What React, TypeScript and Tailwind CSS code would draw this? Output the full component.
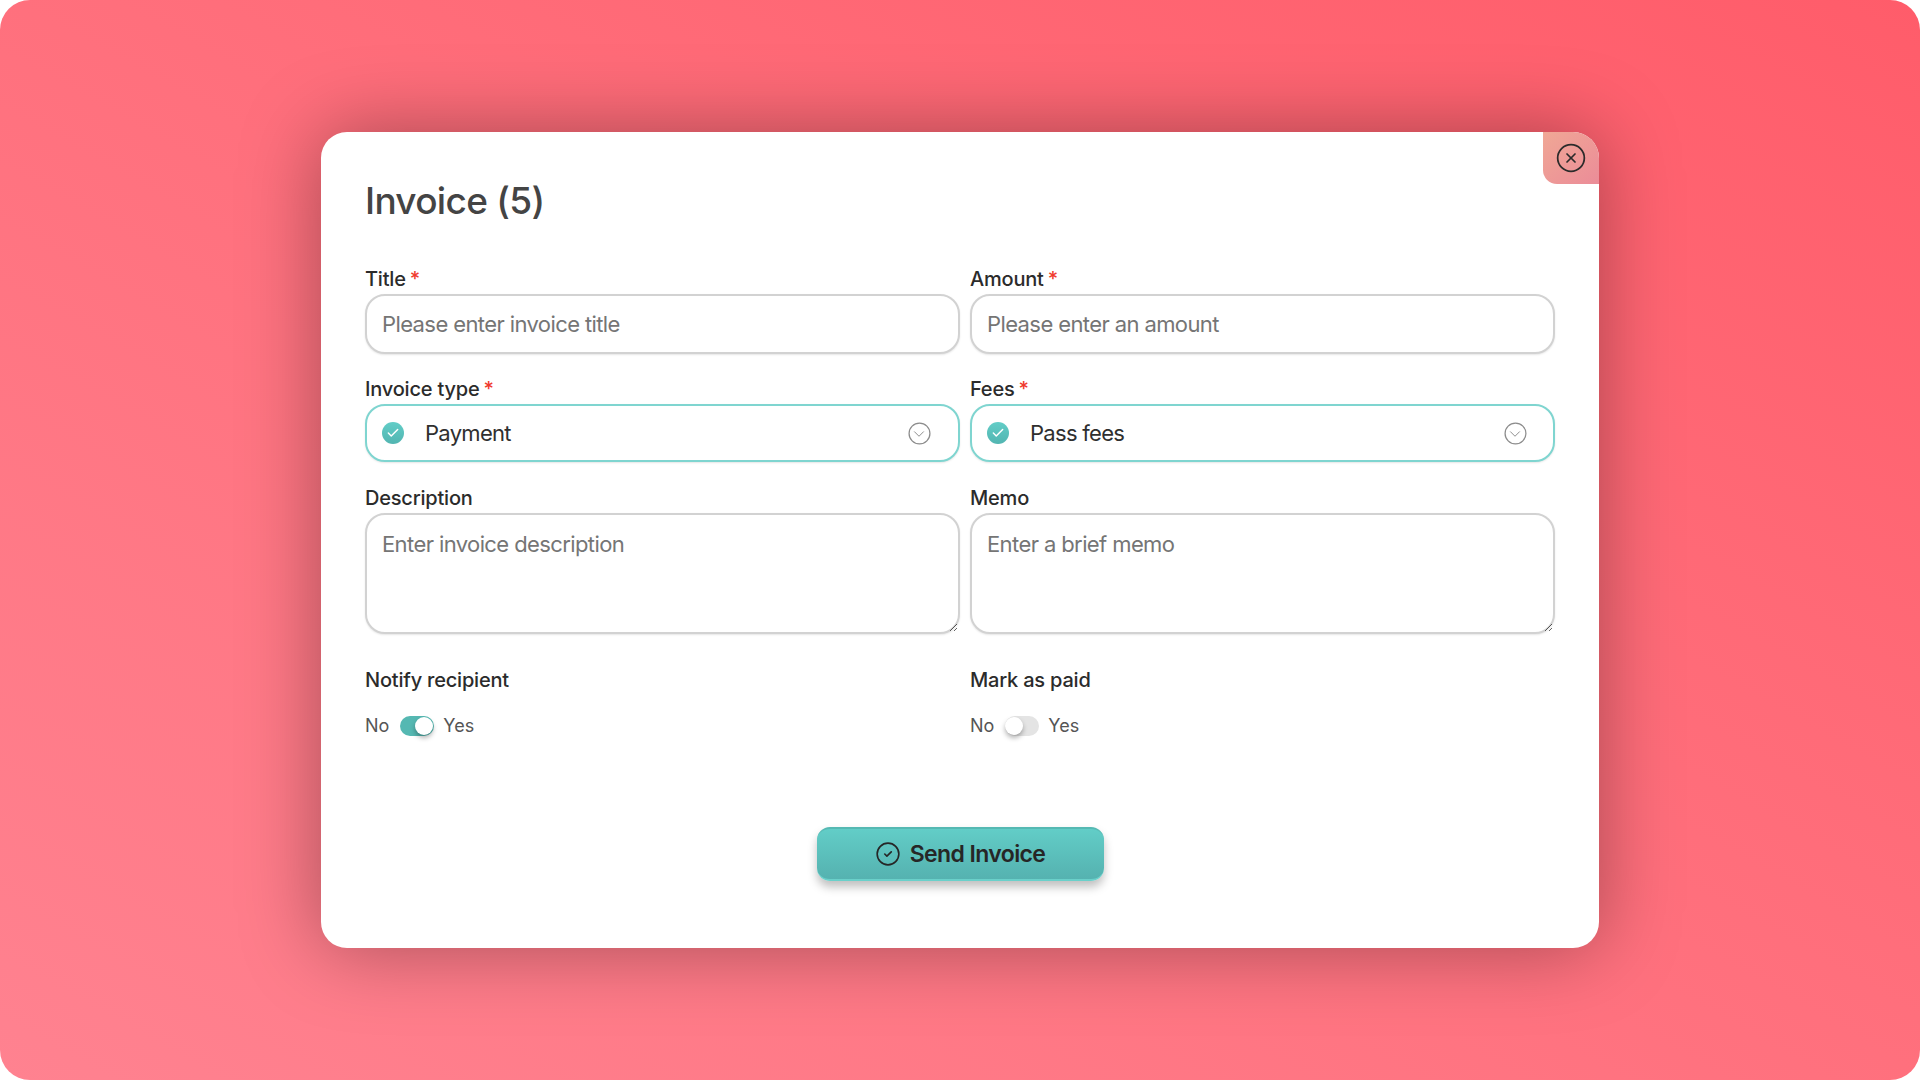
import { ChevronDown, Circle, CircleCheck, CircleX, Check } from "lucide-react";

function Label({ text, required }: { text: string; required?: boolean }) {
  return (
    <label className="block h-[24px] text-[20px] leading-[24px] font-medium tracking-[-0.2px] text-[#2b2b2b]">
      {text}
      {required && <span className="ml-[4px] text-[#f03a2e]">*</span>}
    </label>
  );
}

function TextField({ label, placeholder }: { label: string; placeholder: string }) {
  return (
    <div className="flex flex-col">
      <Label text={label} required />
      <input
        placeholder={placeholder}
        className="mt-[3px] h-[60px] rounded-[20px] border-2 border-[#d2d2d2] bg-white px-[15px] text-[22px] tracking-[-0.6px] text-[#2b2b2b] shadow-[0_1px_2px_rgba(0,0,0,0.1)] outline-none placeholder:text-[#757575]"
      />
    </div>
  );
}

function SelectField({ label, value, arrowRight }: { label: string; value: string; arrowRight: string }) {
  return (
    <div className="flex flex-col">
      <Label text={label} required />
      <div className="mt-[3px] flex h-[58px] items-center rounded-[20px] border-2 border-[#7fd5d0] bg-white pl-[15px] text-[22px] tracking-[-0.7px] text-[#2f2f2f] shadow-[0_1px_2px_rgba(0,0,0,0.1)]">
        <span className="-mt-[1px] flex h-[22px] w-[22px] items-center justify-center rounded-full bg-gradient-to-b from-[#62cdc7] to-[#52b5b1]">
          <Check size={14} strokeWidth={2.5} className="text-white" />
        </span>
        <span className="ml-[21px]">{value}</span>
        <span className={`relative ml-auto flex h-[22px] w-[22px] items-center justify-center text-[#8c8c8c] ${arrowRight}`}>
          <Circle size={25} strokeWidth={1.2} className="absolute" />
          <ChevronDown size={18} strokeWidth={1.3} className="relative top-[1px]" />
        </span>
      </div>
    </div>
  );
}

function AreaField({ label, placeholder }: { label: string; placeholder: string }) {
  return (
    <div className="flex flex-col">
      <Label text={label} />
      <textarea
        placeholder={placeholder}
        className="mt-[3px] h-[121px] rounded-[20px] border-2 border-[#d2d2d2] bg-white px-[15px] py-[15px] text-[22px] leading-[28px] tracking-[-0.6px] text-[#2b2b2b] shadow-[0_1px_2px_rgba(0,0,0,0.1)] outline-none placeholder:text-[#757575]"
      />
    </div>
  );
}

function Toggle({ label, on }: { label: string; on?: boolean }) {
  return (
    <div className="flex flex-col">
      <Label text={label} />
      <div className="mt-[22px] flex items-center text-[18px] leading-[24px] text-[#555]">
        <span>No</span>
        <span className={`relative ml-[11px] mr-[9px] h-[20px] w-[34px] rounded-full ${on ? "bg-[#55b8b2]" : "bg-[#e4e4e4]"}`}>
          <span
            className={`absolute top-[1px] h-[18px] w-[18px] rounded-full bg-white shadow-[0_3px_5px_rgba(0,0,0,0.3)] ${on ? "right-[1px]" : "left-[0px]"}`}
          />
        </span>
        <span>Yes</span>
      </div>
    </div>
  );
}

export default function App() {
  return (
    <div className="flex h-[1080px] w-[1920px] items-center justify-center overflow-hidden bg-white font-['Inter',sans-serif]">
      <div className="flex h-full w-full items-center justify-center rounded-[30px] bg-gradient-to-tr from-[#ff8290] to-[#ff5c6a]">
        <div className="relative h-[816px] w-[1278px] rounded-[26px] bg-white px-[44px] pt-[47px] shadow-[0_0_80px_rgba(0,0,0,0.35)]">
          <button className="absolute right-0 top-0 flex h-[52px] w-[56px] items-center justify-center rounded-bl-[14px] rounded-tr-[26px] bg-gradient-to-br from-[#f0a795] to-[#eb8c98] text-[#2b2b2b]">
            <CircleX size={32} strokeWidth={1.3} />
          </button>

          <h1 className="h-[44px] text-[37px] leading-[44px] font-medium tracking-[-0.7px] text-[#444]">Invoice (5)</h1>

          <div className="mt-[44px] grid grid-cols-[595px_585px] gap-x-[10px]">
            <TextField label="Title" placeholder="Please enter invoice title" />
            <TextField label="Amount" placeholder="Please enter an amount" />
          </div>

          <div className="mt-[23px] grid grid-cols-[595px_585px] gap-x-[10px]">
            <SelectField label="Invoice type" value="Payment" arrowRight="mr-[28px]" />
            <SelectField label="Fees" value="Pass fees" arrowRight="mr-[27px]" />
          </div>

          <div className="mt-[24px] grid grid-cols-[595px_585px] gap-x-[10px]">
            <AreaField label="Description" placeholder="Enter invoice description" />
            <AreaField label="Memo" placeholder="Enter a brief memo" />
          </div>

          <div className="mt-[34px] grid grid-cols-[595px_585px] gap-x-[10px]">
            <Toggle label="Notify recipient" on />
            <Toggle label="Mark as paid" />
          </div>

          <div className="mt-[89px] flex justify-center">
            <button className="flex h-[54px] w-[287px] items-center justify-center gap-[9px] rounded-[13px] border-y-2 border-t-[#55b9b3] border-b-[#6ad0ca] bg-gradient-to-b from-[#62cdc7] to-[#55b2b0] text-[23px] font-semibold tracking-[-0.6px] text-[#262626] shadow-[0_6px_10px_rgba(0,0,0,0.25)]">
              <CircleCheck size={26} strokeWidth={1.5} />
              Send Invoice
            </button>
          </div>
        </div>
      </div>
    </div>
  );
}
